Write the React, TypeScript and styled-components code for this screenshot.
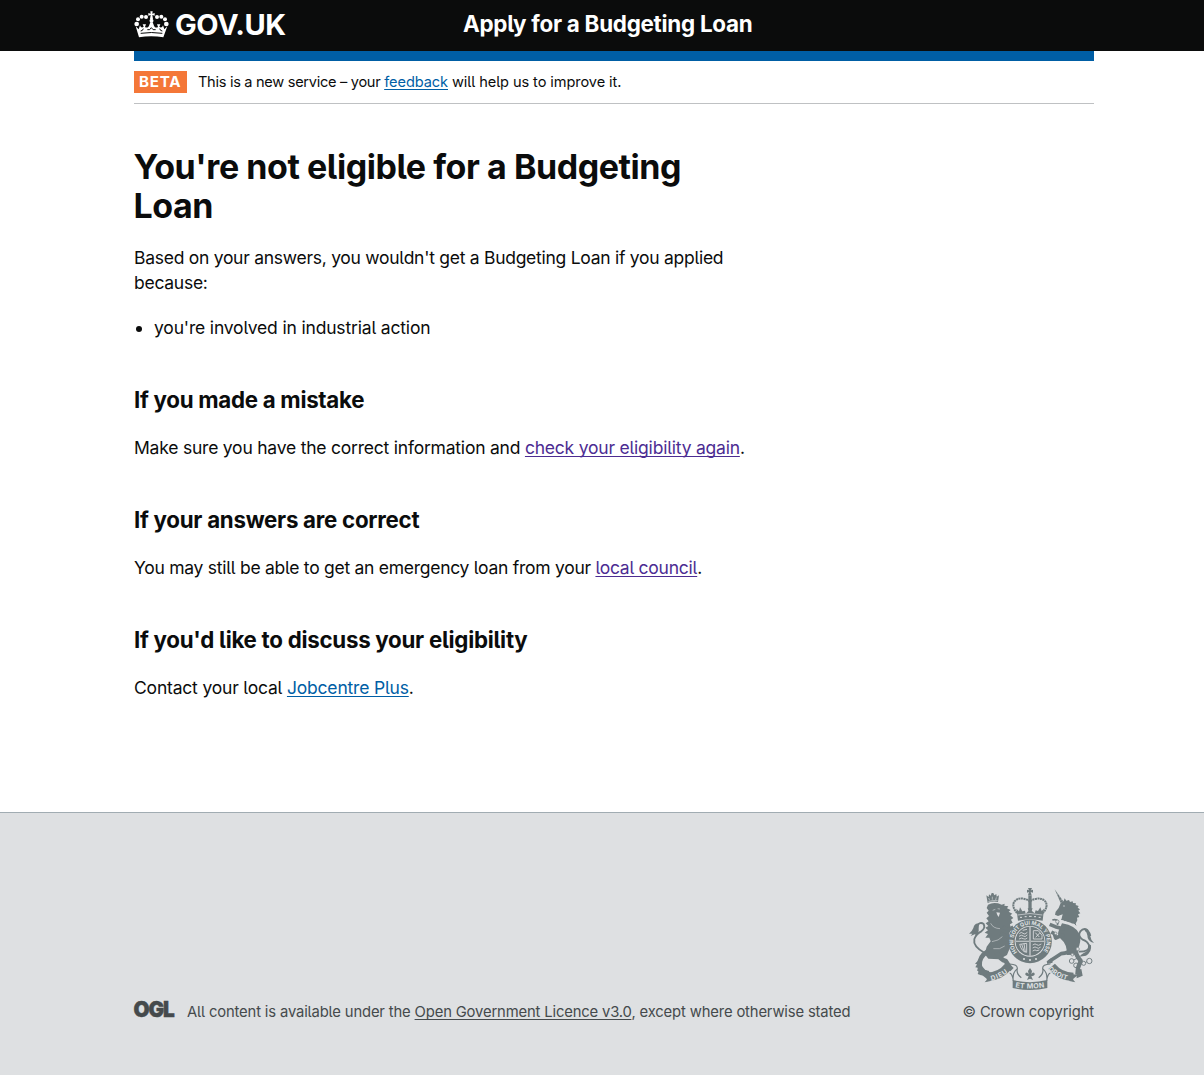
import React from "react";
import styled, { createGlobalStyle } from "styled-components";

const ink = "#0b0c0c";
const paper = "#dee0e2";
const crest = "#6f7b7e";

const GlobalStyle = createGlobalStyle`
  body {
    margin: 0;
    background: #fff;
    color: ${ink};
    font-family: Inter, "Liberation Sans", sans-serif;
    font-feature-settings: "cv05" 1, "calt" 0;
  }
`;

const Page = styled.div`
  display: flex;
  flex-direction: column;
  min-height: 1075px;
`;

const Header = styled.header`
  height: 51px;
  box-sizing: border-box;
  padding-left: 134px;
  background: ${ink};
  color: #fff;
  display: grid;
  grid-template-columns: 329px auto;
  align-items: start;
`;

const Brand = styled.div`
  display: flex;
  align-items: center;
  gap: 6px;
  height: 48px;
`;

const Wordmark = styled.span`
  font-size: 29px;
  font-weight: 650;
  line-height: 48px;
  letter-spacing: -0.5px;
  padding-top: 1px;
`;

const ServiceName = styled.div`
  font-size: 22.4px;
  line-height: 48px;
  font-weight: 700;
  letter-spacing: -0.27px;
  white-space: nowrap;
`;

const Container = styled.div`
  width: 960px;
  margin-left: 134px;
`;

const BlueBar = styled.div`
  height: 10px;
  background: #005ea5;
`;

const PhaseBanner = styled.div`
  height: 42px;
  display: flex;
  align-items: center;
  gap: 11px;
  border-bottom: 1px solid #bfc1c3;
`;

const PhaseTag = styled.strong`
  width: 53px;
  height: 22px;
  box-sizing: border-box;
  padding-left: 5px;
  background: #f47738;
  color: #fff;
  font-size: 15.2px;
  line-height: 22px;
  font-weight: 700;
  letter-spacing: 0.7px;
`;

const PhaseText = styled.span`
  font-size: 14.6px;
  line-height: 20px;
  letter-spacing: -0.09px;
  white-space: nowrap;
`;

const PhaseLead = styled.span`
  letter-spacing: -0.3px;
`;

const Main = styled.main`
  width: 630px;
  padding-top: 43px;
  height: 665px;
`;

const Title = styled.h1`
  margin: 0 0 20px -0.5px;
  font-size: 34px;
  line-height: 39px;
  font-weight: 700;
  letter-spacing: -0.45px;
`;

const Text = styled.p<{ $spacing?: number }>`
  margin: 0;
  font-size: 17.5px;
  line-height: 25px;
  letter-spacing: ${(p) => p.$spacing ?? 0}px;
  white-space: nowrap;
`;

const List = styled.ul`
  margin: 20px 0 0;
  padding-left: 20px;
  font-size: 17.5px;
  line-height: 25px;
  letter-spacing: -0.17px;
`;

const Section = styled.section`
  margin-top: 45px;
`;

const Subtitle = styled.h2<{ $spacing?: number }>`
  margin: 0 0 20px;
  font-size: 22.3px;
  line-height: 30px;
  font-weight: 700;
  letter-spacing: ${(p) => p.$spacing ?? -0.27}px;
`;

const Link = styled.a<{ $visited?: boolean }>`
  color: ${(p) => (p.$visited ? "#4c2c92" : "#005ea5")};
  text-decoration: underline;
  text-decoration-thickness: 1px;
  text-underline-offset: 2px;
  text-decoration-skip-ink: none;
`;

const Footer = styled.footer`
  flex: 1;
  background: ${paper};
  border-top: 1px solid #a1acb2;
  color: #454a4c;
`;

const FooterRow = styled(Container)`
  height: 211px;
  display: flex;
  justify-content: space-between;
  align-items: flex-end;
`;

const Licence = styled.div`
  display: flex;
  align-items: center;
  gap: 12px;
  height: 24px;
`;

const Small = styled.span<{ $spacing?: number }>`
  font-size: 14.8px;
  line-height: 24px;
  letter-spacing: ${(p) => p.$spacing ?? -0.15}px;
  white-space: nowrap;
`;

const LicenceLink = styled(Link)`
  color: #454a4c;
`;

const Copyright = styled.div`
  display: flex;
  flex-direction: column;
  align-items: flex-end;
  gap: 10px;
`;

const LogoSvg = styled.svg`
  overflow: visible;
  flex: none;
`;

const CrownIcon = () => (
  <svg width="35" height="27" viewBox="12 31 105 81" fill="#fff">
    <circle cx="20" cy="70" r="7" />
    <circle cx="24" cy="56" r="6" />
    <circle cx="35" cy="48" r="6" />
    <circle cx="48" cy="49" r="6" />
    <circle cx="109" cy="70" r="7" />
    <circle cx="105" cy="56" r="6" />
    <circle cx="94" cy="48" r="6" />
    <circle cx="81" cy="49" r="6" />
    <circle cx="64.500" cy="60" r="6" />
    <path d="M61 32h7l-1 7 7-2v8l-7-2 2 12h-9l2-12-7 2v-8l7 2z" />
    <path d="M17 77l9 9 4-12c2 7 7 8 11 4l-3-7h10l-3 8c5 4 10 1 12-4l4-10h7l4 10c2 5 7 8 12 4l-3-8h10l-3 7c4 4 9 3 11-4l4 12 9-9-12 33c-24-4-49-4-73 0z" />
    <path d="M32 98q32-5 65 0M32 91q6 0 8-7M97 91q-6 0-8-7M52 87q8 3 12-6 4 9 13 6" fill="none" stroke={ink} strokeWidth="3" />
  </svg>
);

const OglLogo = () => (
  <LogoSvg width="41" height="24" viewBox="0 0 41 24">
    <text
      x="-0.500"
      y="17.200"
      fontFamily="Inter, sans-serif"
      fontSize="22"
      fontWeight="900"
      fill="#454a4c"
      stroke="#454a4c"
      strokeWidth="0.500"
      textLength="40"
      lengthAdjust="spacingAndGlyphs"
      letterSpacing="-1.200"
    >
      OGL
    </text>
  </LogoSvg>
);

const RoyalArms = () => (
  <svg width="125" height="102" viewBox="27 24 375 306" fill={crest}>
    <defs>
      <path id="garter" d="M172 216.500A50 50 0 1 1 248 216.500" />
      <path id="dieu" d="M94 302Q128 294 151 270" />
      <path id="droit" d="M264 268Q288 293 328 302" />
      <path id="mon" d="M166 322Q210 330 256 321" />
    </defs>

    {/* lion */}
    <path d="M79 46l7 5 1-8 5 4 3-8h5l3 7 6-4 1 8 7-4-3 20q-16-4-31 3z" />
    <path d="M86 54l3 7M97 50v9M109 52l-2 8M85 65q13-6 28-3" stroke={paper} strokeWidth="1.800" fill="none" />
    <path d="M84 74Q98 66 114 70L125 74L134 71L133 77L145 79L141 85L152 90L146 95L157 101L151 106L160 114L153 119L158 128L150 133L153 148L148 160L151 200L141 225L118 238L85 236L74 222L80 200L92 184L88 173L76 173L84 162L74 158L84 151L76 143L85 138L77 130L86 124L79 115L87 108L80 98L86 92L80 84Z" />
    <path d="M128 141l18 8 14-8M122 160l20 10 12 7" fill="none" stroke={crest} strokeWidth="11" />
    <path d="M84 214Q57 230 59 256l3 18 24 6" fill="none" stroke={crest} strokeWidth="14" strokeLinejoin="round" />
    <path d="M110 218q12 22 27 25l13 20 6 6" fill="none" stroke={crest} strokeWidth="14" strokeLinejoin="round" />
    <path d="M53 243l-8 8 6 2-5 9 8 1-3 9 6 1-4 9 10 4 27 1 3-9-17-8z" />
    <path d="M98 91l8-3M113 86l7 1M92 130q7 15 28 16M96 185q21-3 31-15M100 206q20 4 34-8" stroke={paper} strokeWidth="1.600" fill="none" />
    <path d="M109 97l11 1-4 13-4-6z" fill={paper} />
    <path d="M74 219Q38 199 43 177q7-17 21-23 13-10 7-22-11-8-20 6" fill="none" stroke={crest} strokeWidth="5.500" />
    <path d="M57 131q-13-4-17 13-3 9-13 17l10 0-5 7 14-6 0 6q12-10 10-22z" />

    {/* unicorn */}
    <path d="M284 28l26 36-8 5z" />
    <path d="M291 43l4-2M296 52l5-3M301 61l6-3" stroke={paper} strokeWidth="1.500" />
    <path d="M302 69l9-6 3-8 5 7 8-2 3 6 8-2 1 5 9 1-1 5 9 3-3 5 7 5-5 4 6 8-7 3 4 8-7 2 1 8-6 12-42-14 4-16-14 5-9-4 2-9 9-11z" />
    <circle cx="312" cy="78" r="2" fill={paper} />
    <path d="M304 119l5-4 5 7 6-4 4 7 7-4 4 8 7-2 6 9" stroke={crest} strokeWidth="3" fill="none" />
    <path d="M304 126q23 6 45 19" stroke={paper} strokeWidth="3" strokeDasharray="5 2.500" fill="none" />
    <path d="M306 130q42 7 54 34 4 24-7 43l-1 17-32 1q3-32-18-49-12-9-6-24z" />
    <path d="M314 148l-28-8-17-7M312 163l-25 11-4-13-9-5M345 203q-19 17-42 18l-23 15-13 10" fill="none" stroke={crest} strokeWidth="11" strokeLinejoin="round" />
    <path d="M345 204q2 22 17 38l-8 22-2 20" fill="none" stroke={crest} strokeWidth="13" strokeLinejoin="round" />
    <path d="M350 269l14-2 4 20-18 8zM274 234l-14 10 2 8 16-4z" />
    <path d="M277 120q12-4 18 5l-3 10" fill="none" stroke={crest} strokeWidth="5" />
    <path d="M356 215q34 1 31-19-4-12-19-17-16-10-7-25 10-12 21-4 7 8 9 18" fill="none" stroke={crest} strokeWidth="5.500" />
    <path d="M376 146q12 2 14 20 2 14 12 23-20-4-20-23-1-10-8-14zM388 193q1 18-18 27-7 4-12 10l20-3q18-11 15-31z" />
    <g fill="none" stroke={crest} strokeWidth="2.800">
      <circle cx="335" cy="243" r="7" />
      <circle cx="348" cy="256" r="7" />
      <circle cx="371" cy="250" r="6" />
      <circle cx="388" cy="243" r="8" />
      <path d="M341 240l12-6M355 256l10-4M377 247l4-2" />
    </g>
    <g fill={paper} stroke={crest} strokeWidth="2">
      <circle cx="292" cy="125" r="5" />
      <circle cx="287" cy="160" r="4" />
      <circle cx="353" cy="207" r="5" />
      <circle cx="337" cy="224" r="4" />
    </g>

    {/* crown */}
    <path d="M207 31l-3-7h12l-3 7 6-2v9l-7-2 3 10h-11l3-10-6 2v-9z" />
    <path d="M171 99q-17-20-8-34 9-12 27-9 12 2 20 8 8-6 20-8 19-2 27 10 8 14-8 33" fill="none" stroke={crest} strokeWidth="6" strokeDasharray="6 1.500" />
    <path d="M205 46h10v46h-10z" />
    <path d="M169 86l8 8 3-12 7 12 8-2 2 9 9-9-3-7h15l-3 7 9 8 3-9 7 2 7-11 4 11 7-7-4 36q-38-9-74 0z" />
    <path d="M173 105q37-9 74 0" fill="none" stroke={paper} strokeWidth="2" />
    <path d="M180 112h6M194 110h6M207 109h8M222 110h6M236 112h6" stroke={paper} strokeWidth="3" />

    {/* garter and shield */}
    <circle cx="210" cy="184" r="65.500" />
    <circle cx="210" cy="184" r="46" fill={paper} />
    <circle cx="210" cy="184" r="43.500" />
    <path d="M210 141v86M167 184h87" stroke={paper} strokeWidth="4" />
    <path d="M210 141v86M167 184h87" stroke={crest} strokeWidth="1.200" />
    <g fill="none" stroke={paper} strokeWidth="2.500">
      <path d="M178 161q6-7 11-1t13-3M177 169q8-6 13-1t12-3M177 177q8-5 13-1t12-2M188 151l13-3" />
      <path d="M218 195q8-6 12-1t14-2M218 204q8-6 12-1t12-2M218 213q8-6 12-1l8-2" />
      <path d="M220 152h15l11 14v11h-26zM226 158l12 13M239 159l-12 13" />
      <path d="M179 193l21-3v27q-15-1-21-24M185 193l8 22M192 191l4 25" />
    </g>
    <text fontFamily="Inter, sans-serif" fontSize="16.500" fontWeight="700" fill={paper}>
      <textPath href="#garter" textLength="224" lengthAdjust="spacingAndGlyphs">
        HONI SOIT QUI MAL Y PENSE
      </textPath>
    </text>
    <g fill={paper}>
      <circle cx="192" cy="237" r="3" />
      <circle cx="210" cy="240" r="3" />
      <circle cx="228" cy="237" r="3" />
    </g>

    {/* motto ribbon */}
    <path d="M80 291Q121 289 145 259M340 291Q299 289 275 259" fill="none" stroke={crest} strokeWidth="25" />
    <path d="M66 285l24-4 2 22-18 4 8-9zM354 285l-24-4-2 22 18 4-8-9z" />
    <path d="M149 252q24 1 23 14-16 13-12 37M149 279q8 2 11 24M271 252q-24 1-23 14 16 13 12 37M271 279q-8 2-11 24M172 266q-4 15 12 27M248 266q4 15-12 27" fill="none" stroke={crest} strokeWidth="3.500" />
    <path d="M158 300q52 13 104 0v24q-52 12-104 0z" />
    <path d="M210 264l6 9-2 10q4-8 9-4 4 6-5 9l-4 1 5 11-9-4-9 4 5-11-4-1q-9-3-5-9 5-4 9 4l-2-10z" />
    <g fontFamily="Inter, sans-serif" fontWeight="700" fill={paper}>
      <text fontSize="20">
        <textPath href="#dieu" textLength="56">DIEU</textPath>
      </text>
      <text fontSize="20">
        <textPath href="#droit" textLength="66">DROIT</textPath>
      </text>
      <text fontSize="21">
        <textPath href="#mon" textLength="88">ET MON</textPath>
      </text>
    </g>
  </svg>
);

export default function App() {
  return (
    <Page>
      <GlobalStyle />
      <Header>
        <Brand>
          <CrownIcon />
          <Wordmark>GOV.UK</Wordmark>
        </Brand>
        <ServiceName>Apply for a Budgeting Loan</ServiceName>
      </Header>
      <Container>
        <BlueBar />
        <PhaseBanner>
          <PhaseTag>BETA</PhaseTag>
          <PhaseText>
            <PhaseLead>This is a new service – your </PhaseLead>
            <Link>feedback</Link> will help us to improve it.
          </PhaseText>
        </PhaseBanner>
        <Main>
          <Title>
            You're not eligible for a Budgeting
            <br />
            Loan
          </Title>
          <Text $spacing={-0.27}>
            Based on your answers, you wouldn't get a Budgeting Loan if you applied
            <br />
            because:
          </Text>
          <List>
            <li>you're involved in industrial action</li>
          </List>
          <Section>
            <Subtitle $spacing={-0.29}>If you made a mistake</Subtitle>
            <Text $spacing={-0.215}>
              Make sure you have the correct information and <Link $visited>check your eligibility again</Link>.
            </Text>
          </Section>
          <Section>
            <Subtitle>If your answers are correct</Subtitle>
            <Text $spacing={-0.27}>
              You may still be able to get an emergency loan from your <Link $visited>local council</Link>.
            </Text>
          </Section>
          <Section>
            <Subtitle>If you'd like to discuss your eligibility</Subtitle>
            <Text $spacing={-0.19}>
              Contact your local <Link>Jobcentre Plus</Link>.
            </Text>
          </Section>
        </Main>
      </Container>
      <Footer>
        <FooterRow>
          <Licence>
            <OglLogo />
            <Small>
              All content is available under the <LicenceLink>Open Government Licence v3.0</LicenceLink>, except where otherwise stated
            </Small>
          </Licence>
          <Copyright>
            <RoyalArms />
            <Small $spacing={-0.14}>© Crown copyright</Small>
          </Copyright>
        </FooterRow>
      </Footer>
    </Page>
  );
}
